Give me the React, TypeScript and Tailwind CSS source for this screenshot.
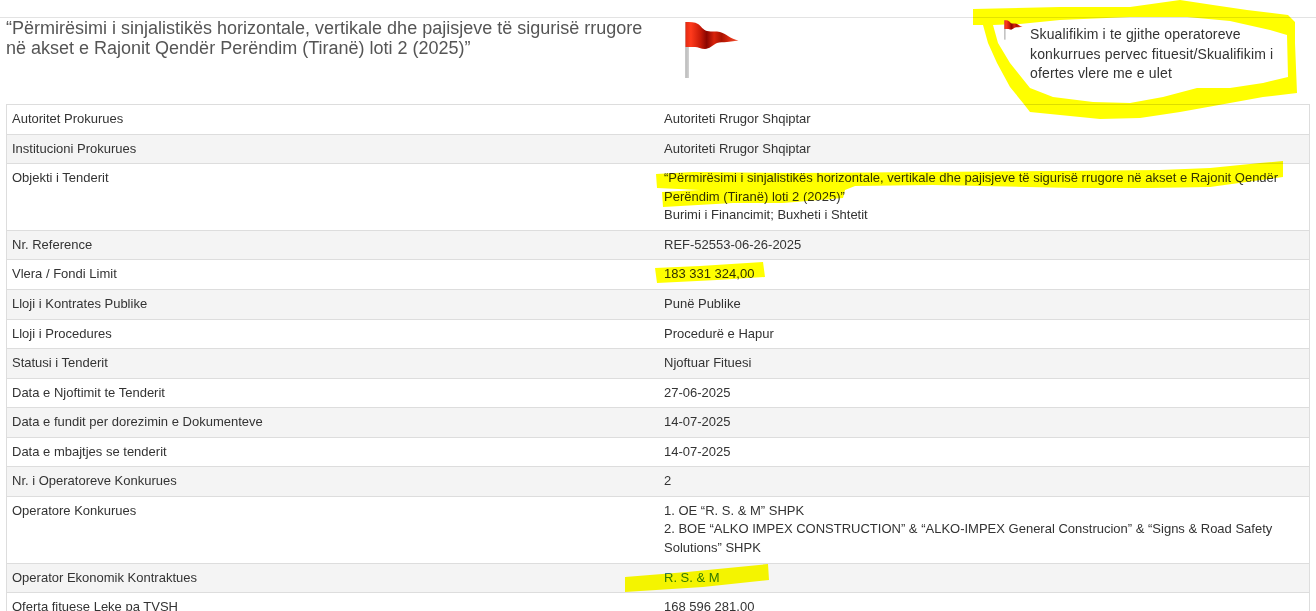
const rows: [string, React.ReactNode][] = [
  ['Autoritet Prokurues', 'Autoriteti Rrugor Shqiptar'],
  ['Institucioni Prokurues', 'Autoriteti Rrugor Shqiptar'],
  [
    'Objekti i Tenderit',
    <>
      “Përmirësimi i sinjalistikës horizontale, vertikale dhe pajisjeve të sigurisë rrugore në akset e Rajonit Qendër
      Perëndim (Tiranë) loti 2 (2025)”
      <br />
      Burimi i Financimit; Buxheti i Shtetit
    </>,
  ],
  ['Nr. Reference', 'REF-52553-06-26-2025'],
  ['Vlera / Fondi Limit', '183 331 324,00'],
  ['Lloji i Kontrates Publike', 'Punë Publike'],
  ['Lloji i Procedures', 'Procedurë e Hapur'],
  ['Statusi i Tenderit', 'Njoftuar Fituesi'],
  ['Data e Njoftimit te Tenderit', '27-06-2025'],
  ['Data e fundit per dorezimin e Dokumenteve', '14-07-2025'],
  ['Data e mbajtjes se tenderit', '14-07-2025'],
  ['Nr. i Operatoreve Konkurues', '2'],
  [
    'Operatore Konkurues',
    <>
      1. OE “R. S. &amp; M” SHPK
      <br />
      2. BOE “ALKO IMPEX CONSTRUCTION” &amp; “ALKO-IMPEX General Construcion” &amp; “Signs &amp; Road Safety Solutions”
      SHPK
    </>,
  ],
  ['Operator Ekonomik Kontraktues', <a className="text-[#337ab7]">R. S. &amp; M</a>],
  ['Oferta fituese Leke pa TVSH', '168 596 281,00'],
];

function Flag({ className }: { className: string }) {
  return (
    <svg viewBox="0 0 54 58" className={className}>
      <defs>
        <linearGradient id="flagRed" x1="0" x2="1" y1="0" y2="0">
          <stop offset="0" stopColor="#e42a12" />
          <stop offset="0.1" stopColor="#ff3a1c" />
          <stop offset="0.28" stopColor="#c81a08" />
          <stop offset="0.4" stopColor="#8a0500" />
          <stop offset="0.54" stopColor="#d8230c" />
          <stop offset="0.68" stopColor="#a81200" />
          <stop offset="0.82" stopColor="#d9280e" />
          <stop offset="1" stopColor="#f0583a" />
        </linearGradient>
        <linearGradient id="flagPole" x1="0" x2="1" y1="0" y2="0">
          <stop offset="0" stopColor="#8f8f8f" />
          <stop offset="0.5" stopColor="#dadada" />
          <stop offset="1" stopColor="#a0a0a0" />
        </linearGradient>
      </defs>
      <rect x="0.500" y="1" width="3" height="56" fill="url(#flagPole)" />
      <path
        d="M0.500 1 C5 1 10 1 13 3 C16 5 18 9 22 10 C27 11 31 10 35 11 C39 12 41 14 43 15 C46 17 50 19 53.500 19.500 C50 20 46 20.500 42 21 C38 21.500 35 21 32 22 C28 24 24 28 20 28 C16 28 13 26 10 26 C6 26 3 26 0.500 26 Z"
        fill="url(#flagRed)"
      />
    </svg>
  );
}

export default function App() {
  return (
    <div className="relative h-[611px] overflow-hidden bg-white font-['Liberation_Sans',Arial,sans-serif] text-[13px] leading-[18.57px] text-[#333]">
      <div className="mt-[17px] flex h-[87px] border-t border-[#e3e3e3]">
        <h3 className="w-[664px] pt-[1px] pl-[6px] text-[18px] leading-[19.800px] text-[#555]">
          “Përmirësimi i sinjalistikës horizontale, vertikale dhe pajisjeve të sigurisë rrugore në akset e Rajonit Qendër
          Perëndim (Tiranë) loti 2 (2025)”
        </h3>
        <div className="w-[340px] pt-[3px] pl-[21px]">
          <Flag className="h-[58px] w-[54px]" />
        </div>
        <div className="relative z-10 flex">
          <Flag className="mt-[2px] h-[20px] w-[19px] shrink-0" />
          <p className="mt-[7px] ml-[7px] w-[255px] text-[14px] leading-[19.500px] tracking-[0.15px]">
            Skualifikim i te gjithe operatoreve konkurrues pervec fituesit/Skualifikim i ofertes vlere me e ulet
          </p>
        </div>
      </div>

      <div className="px-[6px]">
        <table className="w-full table-fixed border-collapse border border-[#ddd]">
          <tbody>
            {rows.map(([label, value]) => (
              <tr key={label} className="even:bg-[#f4f4f4]">
                <td className="border-y border-[#ddd] p-[5px] align-top">{label}</td>
                <td className="border-y border-[#ddd] p-[5px] pl-[6px] align-top">{value}</td>
              </tr>
            ))}
          </tbody>
        </table>
      </div>

      {/* marker scribbles on top of the screenshot, in page coordinates */}
      <svg viewBox="0 0 1316 611" className="absolute inset-0 h-[611px] w-[1316px] mix-blend-multiply">
        <path
          fillRule="evenodd"
          fill="#ffff00"
          d="M973 9 L1060 7 L1130 7 L1180 0 L1213 5 L1247 10 L1288 15 L1295 22 L1295 43 L1297 93 L1263 97 L1230 103 L1180 112 L1140 118 L1100 119 L1060 115 L1030 112 L1023 103 L1010 87 L997 63 L988 43 L983 25 L973 25 Z M993 25 L1020 24 L1060 20 L1130 17 L1187 17 L1230 21 L1270 30 L1287 35 L1288 77 L1263 83 L1230 88 L1197 88 L1163 97 L1130 103 L1093 102 L1053 97 L1030 88 L1010 63 L998 43 Z"
        />
        <path
          fill="#ffff00"
          d="M656 174 L693 172 L800 173 L1060 171 L1160 170 L1210 168 L1260 163 L1283 161 L1283 177 L1210 187 L1150 188 L1073 188 L933 185 L855 186 L845 190 L843 198 L783 203 L733 203 L663 207 L662 192 L700 190 L657 188 Z"
        />
        <path fill="#ffff00" d="M655 268 L700 266 L763 262 L765 277 L717 280 L657 283 Z" />
        <path fill="#ffff00" d="M625 577 L687 572 L768 564 L769 580 L703 587 L625 592 Z" />
      </svg>
    </div>
  );
}
